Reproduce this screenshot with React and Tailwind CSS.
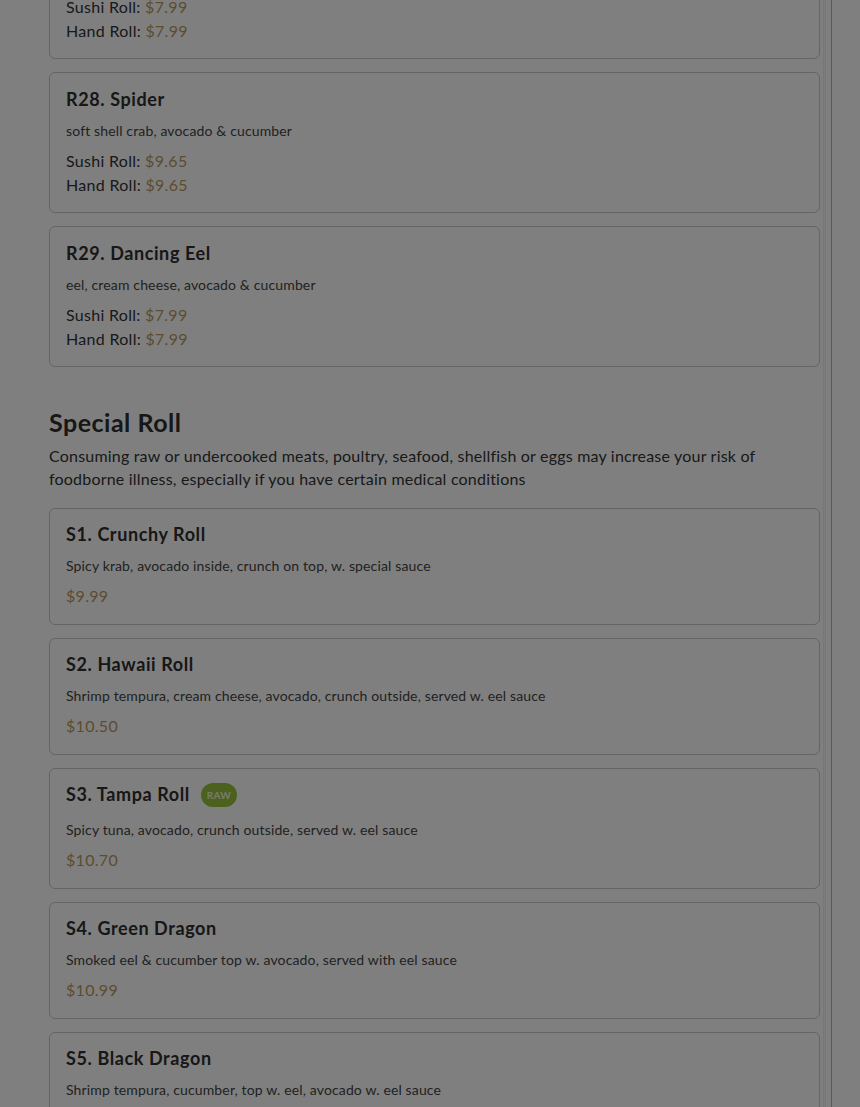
import React from "react";

const rolls = [
  { code: "R27", name: "Rainbow", desc: "krab, avocado & cucumber topped with assorted fish", sushi: "$7.99", hand: "$7.99" },
  { code: "R28", name: "Spider", desc: "soft shell crab, avocado & cucumber", sushi: "$9.65", hand: "$9.65" },
  { code: "R29", name: "Dancing Eel", desc: "eel, cream cheese, avocado & cucumber", sushi: "$7.99", hand: "$7.99" },
];

const specials = [
  { code: "S1", name: "Crunchy Roll", desc: "Spicy krab, avocado inside, crunch on top, w. special sauce", price: "$9.99" },
  { code: "S2", name: "Hawaii Roll", desc: "Shrimp tempura, cream cheese, avocado, crunch outside, served w. eel sauce", price: "$10.50" },
  { code: "S3", name: "Tampa Roll", raw: true, desc: "Spicy tuna, avocado, crunch outside, served w. eel sauce", price: "$10.70" },
  { code: "S4", name: "Green Dragon", desc: "Smoked eel & cucumber top w. avocado, served with eel sauce", price: "$10.99" },
  { code: "S5", name: "Black Dragon", desc: "Shrimp tempura, cucumber, top w. eel, avocado w. eel sauce", price: "$11.99" },
];

function Title({ item }) {
  return (
    <div className={item.raw ? "flex items-start gap-[11px] min-h-[26px]" : "flex items-start"}>
      <h3 className="text-[18px] leading-[22px] font-bold tracking-[0.6px] text-[#2e2e2e]">
        {item.code}. {item.name}
      </h3>
      {item.raw && (
        <span className="rounded-full bg-[#98c23c] px-[6px] h-[24px] flex items-center text-[10px] font-bold text-[#eef7d8] tracking-wide">
          RAW
        </span>
      )}
    </div>
  );
}

function RollCard({ item }) {
  return (
    <div className="bg-white border border-[#c8c8c8] rounded-md px-4 pt-[15px] pb-[15px]">
      <Title item={item} />
      <p className="mt-[11px] text-[14px] leading-[20px] tracking-[0.14px] text-[#444]">{item.desc}</p>
      <div className="mt-2 text-[16px] leading-[24px] tracking-[0.3px] text-[#333]">
        <div>
          Sushi Roll: <span className="text-[#b99a5c]">{item.sushi}</span>
        </div>
        <div>
          Hand Roll: <span className="text-[#b99a5c]">{item.hand}</span>
        </div>
      </div>
    </div>
  );
}

function SpecialCard({ item }) {
  return (
    <div className="bg-white border border-[#c8c8c8] rounded-md px-4 pt-[14px] pb-[16px]">
      <Title item={item} />
      <p className="mt-[11px] text-[14px] leading-[20px] tracking-[0.14px] text-[#444]">{item.desc}</p>
      <div className="mt-2 text-[16px] leading-[24px] tracking-[0.3px] text-[#b99a5c]">{item.price}</div>
    </div>
  );
}

export default function App() {
  return (
    <div className="relative min-h-screen bg-white overflow-hidden" style={{ fontFamily: "Lato, 'Noto Sans', sans-serif" }}>
      <div className="flex">
        <div className="w-[832px] border-r border-[#b4b4b4] flex shrink-0">
          <div className="ml-[49px] w-[771px] mt-[-82px] pb-10">
            <div className="flex flex-col gap-[13px]">
              {rolls.map((r) => (
                <RollCard key={r.code} item={r} />
              ))}
            </div>

            <h2 className="mt-[39px] text-[25px] leading-[32px] font-bold tracking-[0.5px] text-[#2e2e2e]">Special Roll</h2>
            <p className="mt-[6px] text-[16px] leading-[23px] tracking-[0.2px] text-[#333]">
              Consuming raw or undercooked meats, poultry, seafood, shellfish or eggs may increase your risk of
              foodborne illness, especially if you have certain medical conditions
            </p>
            <div className="mt-[18px] flex flex-col gap-[13px]">
              {specials.map((s) => (
                <SpecialCard key={s.code} item={s} />
              ))}
            </div>
          </div>
          <div className="ml-[3px] w-[3px] bg-[#fafafa] border-x border-[#eeeeee]" />
        </div>
      </div>
      <div className="fixed inset-0 bg-black/50" />
    </div>
  );
}
